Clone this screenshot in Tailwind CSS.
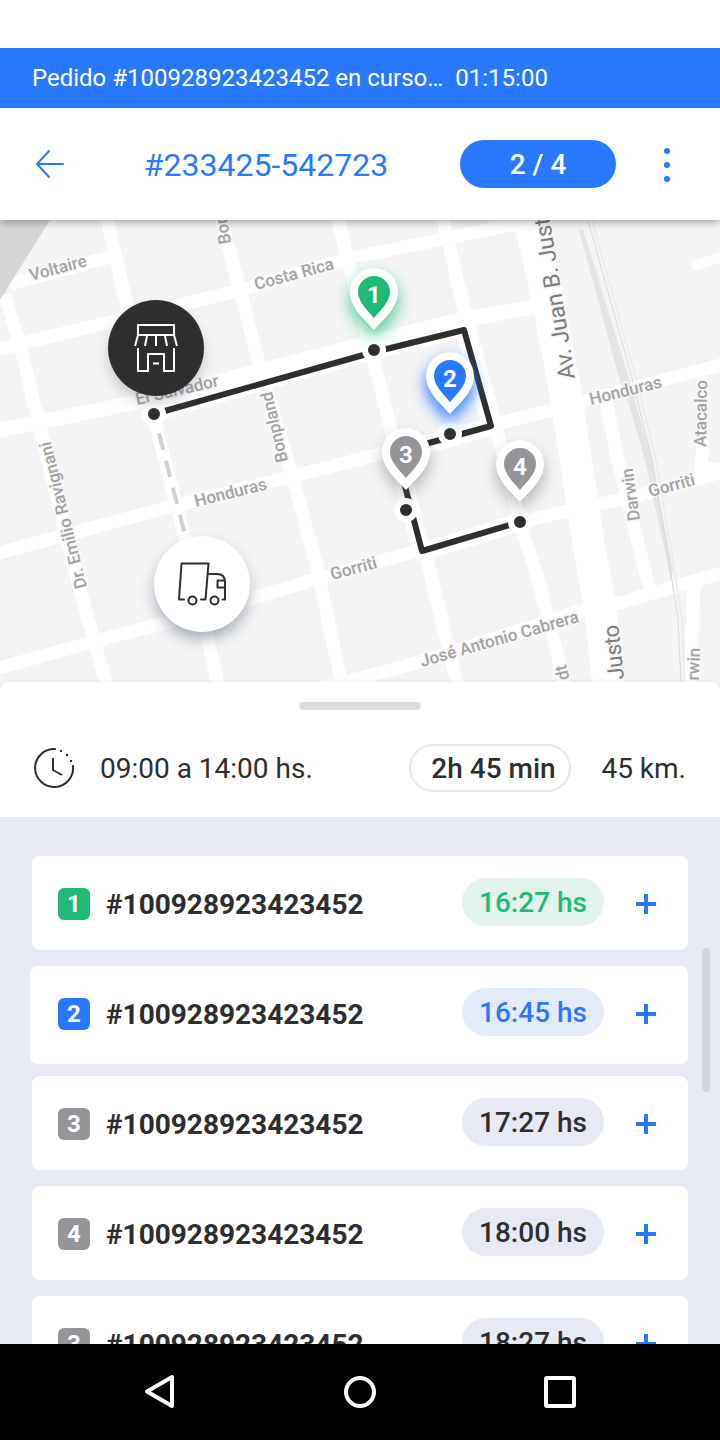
<!DOCTYPE html>
<html lang="es">
<head>
    <meta charset="UTF-8">
    <meta name="viewport" content="width=device-width, initial-scale=1.0">
    <title>Ruta #233425-542723</title>
    <script src="https://cdn.jsdelivr.net/npm/@tailwindcss/browser@4"></script>
</head>
<body class="flex h-screen flex-col overflow-hidden bg-white font-['Roboto',sans-serif] text-[28px] leading-[34px] text-[#2e2e2e]">
    <!-- Current order banner -->
    <div class="relative z-20 mt-12 flex h-15 shrink-0 items-center gap-3 bg-[#2979ff] px-8 text-2xl text-white">
        <span>Pedido #100928923423452 en curso…</span>
        <span>01:15:00</span>
    </div>

    <!-- Header -->
    <header class="relative z-10 flex h-28 shrink-0 items-center bg-white pr-8 pl-7 shadow-[0_2px_8px_rgba(0,0,0,0.35)]">
        <button type="button" aria-label="Volver" class="flex h-11 w-11 items-center justify-center text-[#2979ff]">
            <svg class="h-8 w-8" viewBox="0 0 32 32" fill="none" stroke="currentColor" stroke-width="2" stroke-linecap="round" stroke-linejoin="round">
                <path d="M29 16H3M15 3L3 16L15 29"></path>
            </svg>
        </button>
        <h1 class="flex-1 pt-0.5 text-center text-[32px] text-[#2979ff]">#233425-542723</h1>
        <span class="flex h-12 w-[156px] items-center justify-center rounded-full bg-[#2979ff] pt-0.5 font-medium text-white">2 / 4</span>
        <button type="button" aria-label="Más opciones" class="ml-8 flex h-11 w-10 items-center justify-center text-[#2979ff]">
            <svg class="h-9 w-9" viewBox="0 0 36 36" fill="currentColor">
                <circle cx="17" cy="5" r="3"></circle>
                <circle cx="17" cy="19" r="3"></circle>
                <circle cx="17" cy="33" r="3"></circle>
            </svg>
        </button>
    </header>

    <!-- Map -->
    <main class="flex min-h-0 flex-1 flex-col">
        <div class="h-[462px] shrink-0 bg-[#f4f4f4]">
            <svg class="block h-full w-full" viewBox="0 220 720 462" preserveAspectRatio="xMidYMid slice" role="img" aria-label="Mapa de la ruta">
                <defs>
                    <filter id="soft" x="-60%" y="-60%" width="220%" height="220%">
                        <feGaussianBlur stdDeviation="8"></feGaussianBlur>
                    </filter>
                    <path id="pin-outer" d="M0 38C-8 29 -24 16 -24 0A24 24 0 0 1 24 0C24 16 8 29 0 38Z"></path>
                    <path id="pin-inner" d="M0 26C-5 20 -16 10 -16 0A16 16 0 0 1 16 0C16 10 5 20 0 26Z"></path>
                </defs>

                <!-- Streets -->
                <g fill="none" stroke="#fff" stroke-width="13" stroke-linejoin="round">
                    <path d="M10 284L113 256"></path>
                    <path d="M-5 350L233 292L355 257L540 219"></path>
                    <path d="M-5 431L143 401L380 340L460 320L540 306" stroke-width="15"></path>
                    <path d="M-5 554L177 505L290 477L360 459L500 423L560 408L667 379L725 364"></path>
                    <path d="M-5 669L100 640L160 624L253 598L317 579L420 550L537 518L573 510L640 495L725 471"></path>
                    <path d="M320 688L360 678L420 662L590 608L623 602L725 572"></path>
                    <path d="M5 295L20 345L40 428L80 590L108 690"></path>
                    <path d="M106 215L127 305L153 415L187 545L219 690"></path>
                    <path d="M220 215L243 302L262 375L290 467L317 567L343 690"></path>
                    <path d="M337 215L347 258L373 358L406 490L427 560L459 690"></path>
                    <path d="M442 215L460 292L493 415L520 522L540 587L566 690"></path>
                    <path d="M606 400L617 455L633 523L650 590"></path>
                    <path d="M703 440L701 468L725 471"></path>
                    <path d="M694 580L690 690"></path>
                    <path d="M696 265L725 256" stroke-linecap="round" stroke-width="10"></path>
                    <path d="M527 210L548 300L565 390L575 455L588 540L600 607L609 690" stroke-width="32"></path>
                    <path d="M154 412L374 350L464 328L491 427L396 452L422 552L520 522" stroke-width="18"></path>
                </g>
                <path d="M0 220H50L0 300Z" fill="#d6d6d6"></path>

                <!-- Railway -->
                <path d="M579 230L583 229L628 375L636 405L652 460L673 570L671 580L645 460L629 405L619 378Z" fill="#e4e4e4"></path>
                <g fill="none" stroke-width="1">
                    <path d="M588 220L632 378L652 460L668 555L678 620L681 682" stroke="#dadada"></path>
                    <path d="M592 220L636 378L656 460L672 555L682 620L685 682" stroke="#e6e6e6"></path>
                </g>

                <!-- Street names -->
                <g font-size="17" font-weight="500" fill="#a3a3a3" stroke="#f8f8f8" stroke-width="3" paint-order="stroke">
                    <text transform="translate(31 281) rotate(-15)">Voltaire</text>
                    <text transform="translate(256 290) rotate(-15)">Costa Rica</text>
                    <text transform="translate(137 405) rotate(-13)">El Salvador</text>
                    <text transform="translate(196 507) rotate(-14)">Honduras</text>
                    <text transform="translate(591 405) rotate(-14)">Honduras</text>
                    <text transform="translate(332 580) rotate(-15)">Gorriti</text>
                    <text transform="translate(650 497) rotate(-15)">Gorriti</text>
                    <text transform="translate(422 667) rotate(-16)">José Antonio Cabrera</text>
                    <text transform="translate(87 587) rotate(-104)">Dr. Emilio Ravignani</text>
                    <text transform="translate(288 461) rotate(-103)">Bonpland</text>
                    <text transform="translate(231 243) rotate(-100)">Bon</text>
                    <text transform="translate(706 447) rotate(-89)">Atacalco</text>
                    <text transform="translate(640 520) rotate(-98)">Darwin</text>
                    <text transform="translate(700 648) rotate(-88)" text-anchor="end">rwin</text>
                    <text transform="translate(566 664) rotate(-103)" text-anchor="end">dt</text>
                    <g font-weight="400" fill="#7d7d7d">
                        <text font-size="23" transform="translate(575 378) rotate(-99)">Av. Juan B. Just</text>
                        <text font-size="22" transform="translate(624 679) rotate(-96)">Justo</text>
                    </g>
                </g>

                <!-- Route -->
                <path d="M154 414L185 535" fill="none" stroke="#d0d0d0" stroke-width="4" stroke-dasharray="17 11" stroke-dashoffset="-20"></path>
                <path d="M154 414L374 352L464 330L491 426L396 452L422 551L520 522" fill="none" stroke="#2e2e2e" stroke-width="6" stroke-linejoin="round"></path>
                <g fill="#2e2e2e" stroke="#fff" stroke-width="6">
                    <circle cx="154" cy="414" r="9"></circle>
                    <circle cx="374" cy="350" r="9"></circle>
                    <circle cx="450" cy="434" r="9"></circle>
                    <circle cx="406" cy="510" r="9"></circle>
                    <circle cx="520" cy="522" r="9"></circle>
                </g>

                <!-- Store -->
                <circle cx="156" cy="356" r="46" fill="#43506a" opacity="0.3" filter="url(#soft)"></circle>
                <circle cx="156" cy="348" r="48" fill="#2e2e2e"></circle>
                <path d="M138 325H174V335H138ZM138 335L135 346M147 336L145 346M156 336V346M165 336L167 346M174 335L177 346M138 348V371H148V354H164V371H174V348M153 363.500H159" fill="none" stroke="#fff" stroke-width="2"></path>

                <!-- Truck -->
                <circle cx="202" cy="592" r="46" fill="#43506a" opacity="0.5" filter="url(#soft)"></circle>
                <circle cx="202" cy="584" r="48" fill="#fff"></circle>
                <g fill="none" stroke="#2e2e2e" stroke-width="2" stroke-linecap="round" stroke-linejoin="round">
                    <path d="M184 599.500H179L181.500 563.500H208.500L205.500 599.500H201M208 574H217Q225 574 225 582V599.500H222.500M225 580.500H217.500V587.500H225"></path>
                    <circle cx="192.500" cy="600.500" r="4"></circle>
                    <circle cx="214.500" cy="600.500" r="4"></circle>
                </g>

                <!-- Stops -->
                <g font-size="24" font-weight="700" text-anchor="middle">
                    <g transform="translate(374 292)">
                        <use href="#pin-outer" y="8" fill="#1fb978" opacity="0.75" filter="url(#soft)"></use>
                        <use href="#pin-outer" fill="#fff"></use>
                        <use href="#pin-inner" fill="#1fb978"></use>
                        <text y="11" fill="#fff">1</text>
                    </g>
                    <g transform="translate(450 376)">
                        <use href="#pin-outer" y="8" fill="#2979ff" filter="url(#soft)"></use>
                        <use href="#pin-outer" fill="#fff"></use>
                        <use href="#pin-inner" fill="#2979ff"></use>
                        <text y="11" fill="#fff">2</text>
                    </g>
                    <g transform="translate(406 452)">
                        <use href="#pin-outer" y="8" fill="#555" opacity="0.4" filter="url(#soft)"></use>
                        <use href="#pin-outer" fill="#fff"></use>
                        <use href="#pin-inner" fill="#949499"></use>
                        <text y="11" fill="#fff">3</text>
                    </g>
                    <g transform="translate(520 464)">
                        <use href="#pin-outer" y="8" fill="#555" opacity="0.4" filter="url(#soft)"></use>
                        <use href="#pin-outer" fill="#fff"></use>
                        <use href="#pin-inner" fill="#949499"></use>
                        <text y="11" fill="#fff">4</text>
                    </g>
                </g>
            </svg>
        </div>

        <!-- Route summary -->
        <section class="shrink-0 bg-[#f4f4f4]">
            <div class="rounded-t-lg bg-white px-8 pt-5 pb-[25px] shadow-[0_-1px_4px_rgba(0,0,0,0.06)]">
                <div class="mx-auto h-2 w-[122px] rounded-full bg-[#dddde1]"></div>
                <div class="mt-[34px] flex items-center">
                    <svg class="h-11 w-11" viewBox="0 0 44 44" fill="none" stroke="#2e2e2e" stroke-width="2">
                        <path d="M23 3A19 19 0 1 0 41 20" stroke-linecap="round"></path>
                        <path d="M21 12V24L30 29"></path>
                        <path d="M28 5H30M34 9H36M38 15H40"></path>
                    </svg>
                    <span class="ml-6 pt-0.5">09:00 a 14:00 hs.</span>
                    <span class="ml-auto flex h-12 w-[162px] items-center justify-center rounded-full border-2 border-[#e7e9f4] pt-0.5 pl-1.5 font-medium">2h 45 min</span>
                    <span class="mr-0.5 ml-[30px] pt-0.5">45 km.</span>
                </div>
            </div>
        </section>

        <!-- Orders -->
        <section class="relative min-h-0 flex-1 overflow-hidden bg-[#e7e9f4] px-8 pt-[39px]">
            <ul class="flex flex-col gap-4">
                <li class="flex h-[94px] items-center rounded-lg bg-white pt-[22px] pr-6 pb-5 pl-[26px]">
                    <span class="flex h-8 w-8 items-center justify-center rounded-md bg-[#1fb978] text-2xl font-bold text-white">1</span>
                    <span class="ml-4 pt-0.5 font-bold">#100928923423452</span>
                    <span class="ml-auto flex h-12 w-[142px] items-center justify-center self-start rounded-full bg-[#e2f2ec] pt-0.5 font-medium text-[#1fb978]">16:27 hs</span>
                    <button type="button" aria-label="Ver pedido 1" class="ml-6 flex h-9 w-9 items-center justify-center text-[#2979ff]">
                        <svg class="h-5 w-5" viewBox="0 0 20 20" stroke="currentColor" stroke-width="4"><path d="M10 0V20M0 10H20"></path></svg>
                    </button>
                </li>
                <li class="-mb-1 -ml-0.5 flex h-[98px] items-center rounded-lg bg-white pt-[22px] pr-6 pb-6 pl-7">
                    <span class="flex h-8 w-8 items-center justify-center rounded-md bg-[#2979ff] text-2xl font-bold text-white">2</span>
                    <span class="ml-4 pt-0.5 font-bold">#100928923423452</span>
                    <span class="ml-auto flex h-12 w-[142px] items-center justify-center self-start rounded-full bg-[#e3ebf8] pt-0.5 font-medium text-[#2979ff]">16:45 hs</span>
                    <button type="button" aria-label="Ver pedido 2" class="ml-6 flex h-9 w-9 items-center justify-center text-[#2979ff]">
                        <svg class="h-5 w-5" viewBox="0 0 20 20" stroke="currentColor" stroke-width="4"><path d="M10 0V20M0 10H20"></path></svg>
                    </button>
                </li>
                <li class="flex h-[94px] items-center rounded-lg bg-white pt-[22px] pr-6 pb-5 pl-[26px]">
                    <span class="flex h-8 w-8 items-center justify-center rounded-md bg-[#949499] text-2xl font-bold text-white">3</span>
                    <span class="ml-4 pt-0.5 font-bold">#100928923423452</span>
                    <span class="ml-auto flex h-12 w-[142px] items-center justify-center self-start rounded-full bg-[#e7e9f4] pt-0.5 font-medium">17:27 hs</span>
                    <button type="button" aria-label="Ver pedido 3" class="ml-6 flex h-9 w-9 items-center justify-center text-[#2979ff]">
                        <svg class="h-5 w-5" viewBox="0 0 20 20" stroke="currentColor" stroke-width="4"><path d="M10 0V20M0 10H20"></path></svg>
                    </button>
                </li>
                <li class="flex h-[94px] items-center rounded-lg bg-white pt-[22px] pr-6 pb-5 pl-[26px]">
                    <span class="flex h-8 w-8 items-center justify-center rounded-md bg-[#949499] text-2xl font-bold text-white">4</span>
                    <span class="ml-4 pt-0.5 font-bold">#100928923423452</span>
                    <span class="ml-auto flex h-12 w-[142px] items-center justify-center self-start rounded-full bg-[#e7e9f4] pt-0.5 font-medium">18:00 hs</span>
                    <button type="button" aria-label="Ver pedido 4" class="ml-6 flex h-9 w-9 items-center justify-center text-[#2979ff]">
                        <svg class="h-5 w-5" viewBox="0 0 20 20" stroke="currentColor" stroke-width="4"><path d="M10 0V20M0 10H20"></path></svg>
                    </button>
                </li>
                <li class="flex h-[94px] items-center rounded-lg bg-white pt-[22px] pr-6 pb-5 pl-[26px]">
                    <span class="flex h-8 w-8 items-center justify-center rounded-md bg-[#949499] text-2xl font-bold text-white">3</span>
                    <span class="ml-4 pt-0.5 font-bold">#100928923423452</span>
                    <span class="ml-auto flex h-12 w-[142px] items-center justify-center self-start rounded-full bg-[#e7e9f4] pt-0.5 font-medium">18:27 hs</span>
                    <button type="button" aria-label="Ver pedido 5" class="ml-6 flex h-9 w-9 items-center justify-center text-[#2979ff]">
                        <svg class="h-5 w-5" viewBox="0 0 20 20" stroke="currentColor" stroke-width="4"><path d="M10 0V20M0 10H20"></path></svg>
                    </button>
                </li>
            </ul>
            <!-- Scroll thumb -->
            <div class="absolute top-[131px] right-2.5 h-36 w-2 rounded-full bg-[#d3d5da]"></div>
        </section>
    </main>

    <!-- System navigation -->
    <nav class="flex h-24 shrink-0 items-center justify-between bg-black px-[20%] text-white">
        <button type="button" aria-label="Atrás">
            <svg class="h-9 w-8" viewBox="0 0 32 36" fill="none" stroke="currentColor" stroke-width="4" stroke-linejoin="round"><path d="M28 3V32L3 17.500Z"></path></svg>
        </button>
        <button type="button" aria-label="Inicio">
            <svg class="h-8 w-8" viewBox="0 0 32 32" fill="none" stroke="currentColor" stroke-width="4"><circle cx="16" cy="16" r="14"></circle></svg>
        </button>
        <button type="button" aria-label="Recientes">
            <svg class="h-8 w-8" viewBox="0 0 32 32" fill="none" stroke="currentColor" stroke-width="4"><rect x="2" y="2" width="28" height="28" rx="1"></rect></svg>
        </button>
    </nav>
</body>
</html>
